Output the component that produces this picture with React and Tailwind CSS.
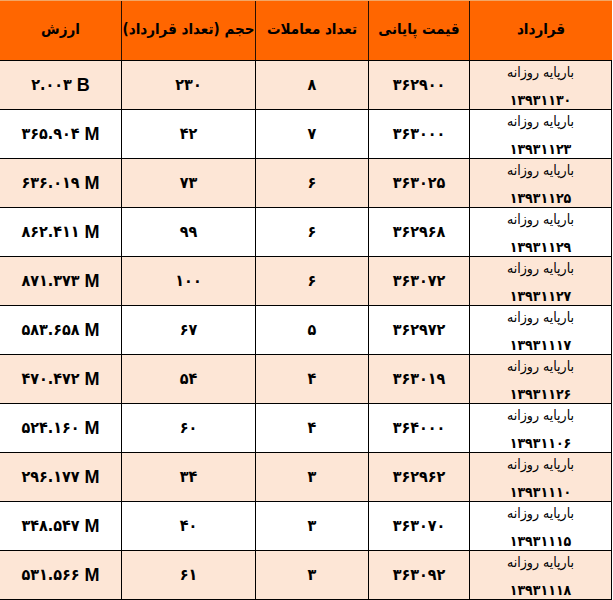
import React from "react";

const rows = [
  ["۲.۰۰۳", "B", "۲۳۰", "۸", "۳۶۲۹۰۰", "۱۳۹۳۱۱۳۰"],
  ["۳۶۵.۹۰۴", "M", "۴۲", "۷", "۳۶۳۰۰۰", "۱۳۹۳۱۱۲۳"],
  ["۶۳۶.۰۱۹", "M", "۷۳", "۶", "۳۶۳۰۲۵", "۱۳۹۳۱۱۲۵"],
  ["۸۶۲.۴۱۱", "M", "۹۹", "۶", "۳۶۲۹۶۸", "۱۳۹۳۱۱۲۹"],
  ["۸۷۱.۳۷۳", "M", "۱۰۰", "۶", "۳۶۳۰۷۲", "۱۳۹۳۱۱۲۷"],
  ["۵۸۳.۶۵۸", "M", "۶۷", "۵", "۳۶۲۹۷۲", "۱۳۹۳۱۱۱۷"],
  ["۴۷۰.۴۷۲", "M", "۵۴", "۴", "۳۶۳۰۱۹", "۱۳۹۳۱۱۲۶"],
  ["۵۲۴.۱۶۰", "M", "۶۰", "۴", "۳۶۴۰۰۰", "۱۳۹۳۱۱۰۶"],
  ["۲۹۶.۱۷۷", "M", "۳۴", "۳", "۳۶۲۹۶۲", "۱۳۹۳۱۱۱۰"],
  ["۳۴۸.۵۴۷", "M", "۴۰", "۳", "۳۶۳۰۷۰", "۱۳۹۳۱۱۱۵"],
  ["۵۳۱.۵۶۶", "M", "۶۱", "۳", "۳۶۳۰۹۲", "۱۳۹۳۱۱۱۸"],
];

const font = { fontFamily: '"DejaVu Sans Condensed", "DejaVu Sans", sans-serif' };

export default function App() {
  return (
    <div className="w-[613px] h-[600px] bg-white overflow-hidden" style={font}>
      <div className="w-[612px] flex flex-col text-black">
        {/* header */}
        <div className="flex h-[61px] bg-[#ff6600] border-t border-[#f2a665] border-b border-b-black">
          <div className="w-[122px] border-r border-[#2a1000] flex items-center justify-center text-[15px] font-bold whitespace-nowrap pb-[2px]" dir="rtl">ارزش</div>
          <div className="w-[134px] border-r border-[#2a1000] flex items-center justify-center text-[15px] font-bold whitespace-nowrap pb-[2px]" dir="rtl">حجم (تعداد قرارداد)</div>
          <div className="w-[113px] border-r border-[#2a1000] flex items-center justify-center text-[15px] font-bold whitespace-nowrap pb-[2px]" dir="rtl">تعداد معاملات</div>
          <div className="w-[101px] border-r border-[#2a1000] flex items-center justify-center text-[15px] font-bold whitespace-nowrap pb-[2px]" dir="rtl">قیمت پایانی</div>
          <div className="w-[142px] flex items-center justify-center text-[15px] font-bold whitespace-nowrap pb-[2px]" dir="rtl">قرارداد</div>
        </div>
        {rows.map((r, i) => (
          <div
            key={i}
            className={`flex h-[49px] border-b border-black ${i % 2 === 0 ? "bg-[#fde6d6]" : "bg-white"}`}
          >
            <div className="w-[122px] border-r border-black flex items-center justify-center gap-[5px] font-bold" dir="ltr">
              <span className="text-[16px]">{r[0]}</span>
              <span className="text-[18px] leading-none" style={{ fontFamily: '"Liberation Sans", Arial, sans-serif' }}>{r[1]}</span>
            </div>
            <div className="w-[134px] border-r border-black flex items-center justify-center text-[16px] font-bold">{r[2]}</div>
            <div className="w-[113px] border-r border-black flex items-center justify-center text-[16px] font-bold">{r[3]}</div>
            <div className="w-[101px] border-r border-black flex items-center justify-center text-[16px] font-bold">{r[4]}</div>
            <div className="w-[142px] border-r border-black flex flex-col justify-between items-center pt-[1px] pb-[1px]" dir="rtl">
              <span className="text-[14px] leading-[20px]">بارپایه روزانه</span>
              <span className="text-[14px] leading-[16px] font-bold">{r[5]}</span>
            </div>
          </div>
        ))}
      </div>
    </div>
  );
}
